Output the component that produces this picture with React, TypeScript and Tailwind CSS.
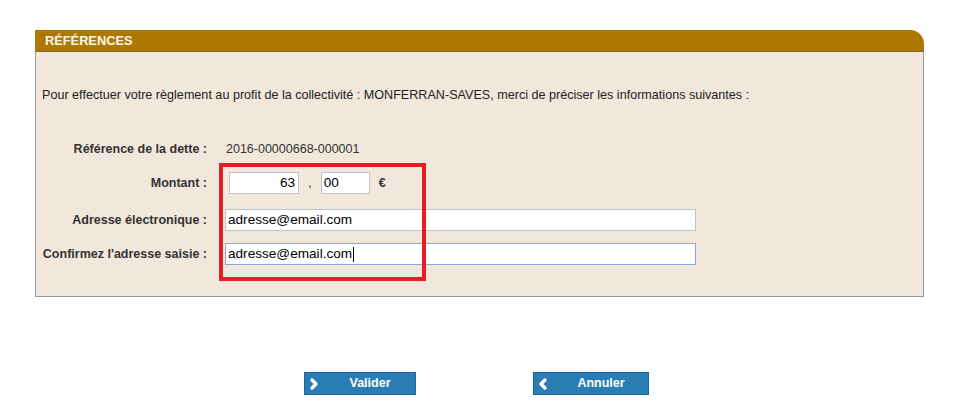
import { ChevronLeft, ChevronRight } from 'lucide-react';

const font = "font-['Liberation_Sans',Arial,sans-serif]";

function Row({ label, children, className = '' }: { label: string; children: React.ReactNode; className?: string }) {
  return (
    <div className={`flex h-[22px] items-center ${className}`}>
      <div className="w-[171px] text-right text-[12.5px] font-bold text-[#333]">{label}</div>
      <div className="ml-[18px] flex items-center">{children}</div>
    </div>
  );
}

function Field({ value, focused = false }: { value: string; focused?: boolean }) {
  return (
    <div
      className={`flex h-[22px] w-[471px] items-center border bg-white pl-[2px] text-[13.6px] text-black ${
        focused ? 'border-[#8aa8d4]' : 'border-[#c4c4c4]'
      }`}
    >
      {value}
      {focused && <span className="ml-px h-[15px] w-px bg-black" />}
    </div>
  );
}

function NavButton({ label, dir, width }: { label: string; dir: 'left' | 'right'; width: string }) {
  const Icon = dir === 'right' ? ChevronRight : ChevronLeft;
  return (
    <button
      className={`flex h-[23px] ${width} items-center border border-[#1d6696] bg-[#2a7db3] text-[12.5px] font-bold text-white`}
    >
      <Icon className="ml-[1px] h-[16px] w-[16px]" strokeWidth={5} />
      <span className="flex-1 pl-[3px] text-center">{label}</span>
    </button>
  );
}

export default function App() {
  return (
    <div className={`relative h-[415px] w-[954px] bg-white ${font}`}>
      <div className="pt-[30px] pl-[35px]">
        <div className="w-[889px]">
          {/* Header */}
          <div className="flex h-[22px] items-center rounded-tr-[14px] border-b border-[#8a6a30] bg-[#ad7800] pl-[10px] text-[12.8px] font-bold text-[#fff6e6]">
            RÉFÉRENCES
          </div>

          {/* Body */}
          <div className="border-x border-b border-[#9a9a9a] bg-[#f1e7dc] pt-[36px] pb-[31px]">
            <p className="pl-[6px] text-[12.6px] leading-[15px] text-[#222]">
              Pour effectuer votre règlement au profit de la collectivité : MONFERRAN-SAVES, merci de préciser les informations suivantes :
            </p>

            <Row label="Référence de la dette :" className="mt-[35px]">
              <span className="pl-[1px] text-[12.5px] text-[#333]">2016-00000668-000001</span>
            </Row>

            <Row label="Montant :" className="mt-[12px]">
              <div className="ml-[4px] flex h-[22px] w-[70px] items-center justify-end border border-[#c4c4c4] bg-white pr-[3px] text-[13.6px] text-black">
                63
              </div>
              <span className="ml-[9px] text-[13px] text-[#333]">,</span>
              <div className="ml-[9px] flex h-[22px] w-[49px] items-center border border-[#c4c4c4] bg-white pl-[2px] text-[13.6px] text-black">
                00
              </div>
              <span className="ml-[9px] text-[12.5px] font-bold text-[#333]">€</span>
            </Row>

            <Row label="Adresse électronique :" className="mt-[15px]">
              <Field value="adresse@email.com" />
            </Row>

            <Row label="Confirmez l'adresse saisie :" className="mt-[12px]">
              <Field value="adresse@email.com" focused />
            </Row>
          </div>
        </div>
      </div>

      {/* Buttons */}
      <div className="mt-[75px] flex pl-[304px]">
        <NavButton label="Valider" dir="right" width="w-[112px]" />
        <div className="ml-[117px]">
          <NavButton label="Annuler" dir="left" width="w-[116px]" />
        </div>
      </div>

      {/* Red highlight annotation */}
      <div className="absolute top-[163px] left-[219px] h-[118px] w-[207px] border-4 border-[#e31e24]" />
    </div>
  );
}
